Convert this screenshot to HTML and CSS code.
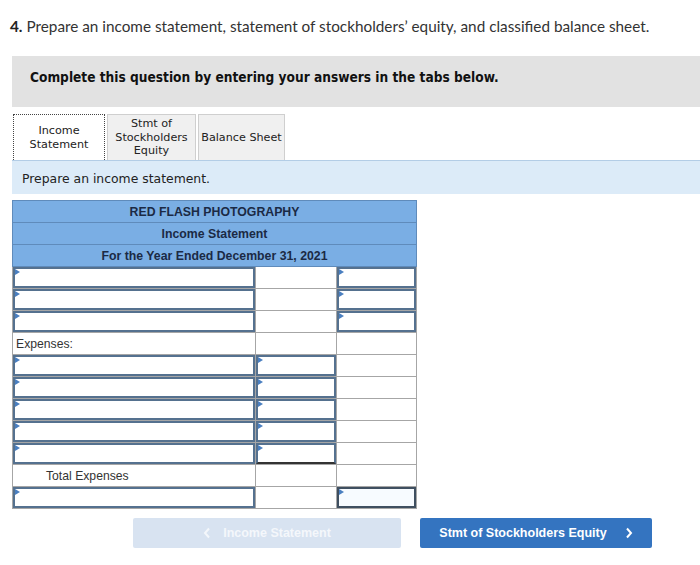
FILE: index.html
```html
<!DOCTYPE html>
<html>
<head>
<meta charset="utf-8">
<link rel="stylesheet" href="styles.css">
</head>
<body>
<div class="page">
  <p class="title"><b>4.</b> Prepare an income statement, statement of stockholders’ equity, and classified balance sheet.</p>
  <div class="notice">Complete this question by entering your answers in the tabs below.</div>
  <div class="tabs">
    <div class="tab active">Income<br>Statement</div>
    <div class="tab">Stmt of<br>Stockholders<br>Equity</div>
    <div class="tab">Balance Sheet</div>
  </div>
  <div class="band">Prepare an income statement.</div>
  <table class="sheet">
    <colgroup><col class="c1"><col class="c2"><col class="c3"></colgroup>
    <tr class="head"><td colspan="3">RED FLASH PHOTOGRAPHY</td></tr>
    <tr class="head"><td colspan="3">Income Statement</td></tr>
    <tr class="head"><td colspan="3">For the Year Ended December 31, 2021</td></tr>
    <tr><td><div class="inp"></div></td><td></td><td><div class="inp"></div></td></tr>
    <tr><td><div class="inp"></div></td><td></td><td><div class="inp"></div></td></tr>
    <tr><td><div class="inp"></div></td><td></td><td><div class="inp"></div></td></tr>
    <tr><td class="label">Expenses:</td><td></td><td></td></tr>
    <tr><td><div class="inp"></div></td><td><div class="inp"></div></td><td></td></tr>
    <tr><td><div class="inp"></div></td><td><div class="inp"></div></td><td></td></tr>
    <tr><td><div class="inp"></div></td><td><div class="inp"></div></td><td></td></tr>
    <tr><td><div class="inp"></div></td><td><div class="inp"></div></td><td></td></tr>
    <tr><td><div class="inp"></div></td><td><div class="inp last"></div></td><td></td></tr>
    <tr><td class="label indent">Total Expenses</td><td></td><td></td></tr>
    <tr><td><div class="inp"></div></td><td></td><td><div class="inp total"></div></td></tr>
  </table>
  <div class="nav">
    <div class="btn prev"><svg class="chev" viewBox="0 0 8 12" width="8" height="12"><path d="M6 1.5 L2 6 L6 10.5" fill="none" stroke="currentColor" stroke-width="2"/></svg><span>Income Statement</span></div>
    <div class="btn next"><span>Stmt of Stockholders Equity</span><svg class="chev" viewBox="0 0 8 12" width="8" height="12"><path d="M2 1.5 L6 6 L2 10.5" fill="none" stroke="currentColor" stroke-width="2"/></svg></div>
  </div>
</div>
</body>
</html>
```
FILE: styles.css
```css
html, body { margin: 0; padding: 0; background: #fff; }
.page { width: 700px; overflow: hidden; }
.title {
  margin: 0;
  padding: 17px 0 0 10px;
  height: 39px;
  box-sizing: border-box;
  font-family: Lato, "Open Sans", sans-serif;
  font-size: 15.3px;
  color: #333;
  white-space: nowrap;
}
.title b { font-weight: 700; color: #222; }
.notice {
  margin: 17px 0 0 12px;
  height: 51px;
  box-sizing: border-box;
  padding: 13px 0 0 18px;
  background: #e2e2e2;
  font-family: "DejaVu Sans Condensed", "DejaVu Sans", sans-serif;
  font-stretch: condensed;
  font-weight: 700;
  font-size: 13.6px;
  color: #111;
  white-space: nowrap;
}
.tabs {
  display: flex;
  gap: 2px;
  margin: 7px 0 0 13px;
  height: 46px;
}
.tab {
  box-sizing: border-box;
  height: 46px;
  display: flex;
  align-items: center;
  justify-content: center;
  text-align: center;
  font-family: "DejaVu Sans", Verdana, sans-serif;
  font-size: 11.2px;
  line-height: 13.5px;
  color: #222;
  background: #f0f0f0;
  border: 1px solid #cfcfcf;
  border-bottom: none;
}
.tab:nth-child(1) { width: 92px; }
.tab:nth-child(2) { width: 89px; }
.tab:nth-child(3) { width: 87px; }
.tab.active { background: #fff; border: 1px dotted #444; border-bottom: none; }
.band {
  margin-left: 12px;
  height: 34px;
  box-sizing: border-box;
  padding: 10px 0 0 10px;
  background: #dcebf8;
  border-top: 1px solid #b3cde6;
  font-family: "DejaVu Sans", Verdana, sans-serif;
  font-size: 12.4px;
  color: #222;
}
.sheet {
  margin: 6px 0 0 12px;
  border-collapse: collapse;
  table-layout: fixed;
  width: 404px;
  font-family: "Liberation Sans", Arial, sans-serif;
  font-size: 12.2px;
  color: #333;
}
.c1 { width: 243px; }
.c2 { width: 81px; }
.c3 { width: 80px; }
.sheet td {
  height: 22px;
  padding: 0;
  border: 1px solid #a6a6a6;
  box-sizing: border-box;
}
.sheet tr.head td {
  background: #7aaee4;
  border: 1px solid #5f8bbb;
  text-align: center;
  font-weight: 700;
  font-size: 12.3px;
  color: #1b2a45;
}
.sheet td.label { padding-left: 3px; }
.sheet td.indent { padding-left: 33px; }
.inp {
  position: relative;
  height: 21px;
  box-sizing: border-box;
  border: 2px solid #55718f;
  background: #fff;
}
.inp::before {
  content: "";
  position: absolute;
  left: 0;
  top: 0;
  border-top: 3px solid transparent;
  border-bottom: 3px solid transparent;
  border-left: 5px solid #4a7fc0;
}
.inp.last { border-bottom-color: #333; }
.inp.total { border-color: #3f4f60; background: #f7fbff; }
.nav {
  display: flex;
  gap: 19px;
  margin: 9px 0 0 133px;
}
.btn {
  height: 30px;
  box-sizing: border-box;
  border-radius: 2px;
  display: flex;
  align-items: center;
  justify-content: center;
  gap: 12px;
  font-family: "Liberation Sans", Arial, sans-serif;
  font-weight: 700;
  font-size: 12.5px;
}
.btn.prev { width: 268px; background: #d8e3f1; color: #f4f7fb; }
.btn.next { width: 232px; background: #3474c0; color: #fff; gap: 18px; }
.chev { display: block; }
```
